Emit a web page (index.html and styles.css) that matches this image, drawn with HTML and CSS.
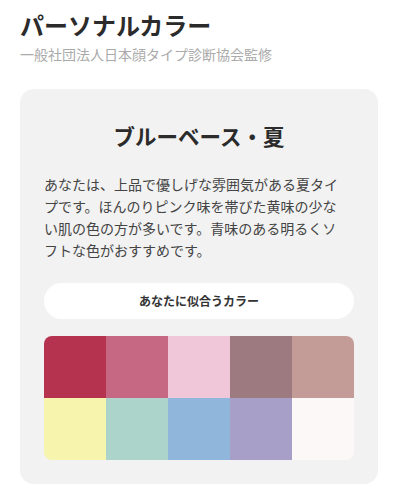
FILE: index.html
```html
<!DOCTYPE html>
<html lang="ja">
<head>
    <meta charset="UTF-8">
    <meta name="viewport" content="width=device-width, initial-scale=1.0">
    <title>パーソナルカラー</title>
    <link rel="stylesheet" href="styles.css">
</head>
<body>
    <div class="page">
        <h1 class="title">パーソナルカラー</h1>
        <p class="subtitle">一般社団法人日本顔タイプ診断協会監修</p>

        <div class="result-card">
            <h2 class="result-title">ブルーベース・夏</h2>
            <p class="result-text">あなたは、上品で優しげな雰囲気がある夏タイプです。ほんのりピンク味を帯びた黄味の少ない肌の色の方が多いです。青味のある明るくソフトな色がおすすめです。</p>
            <div class="label-pill">あなたに似合うカラー</div>
            <div class="palette">
                <div class="swatch c1"></div>
                <div class="swatch c2"></div>
                <div class="swatch c3"></div>
                <div class="swatch c4"></div>
                <div class="swatch c5"></div>
                <div class="swatch c6"></div>
                <div class="swatch c7"></div>
                <div class="swatch c8"></div>
                <div class="swatch c9"></div>
                <div class="swatch c10"></div>
            </div>
        </div>
    </div>
</body>
</html>
```

FILE: styles.css
```css
body {
    font-family: "Noto Sans CJK JP", "Noto Sans", sans-serif;
    margin: 0;
    background-color: #ffffff;
    color: #333333;
}
.page {
    padding: 10px 22px 0 20px;
}
.title {
    font-size: 24px;
    font-weight: bold;
    line-height: 30px;
    margin: 0;
    color: #2b2b2b;
}
.subtitle {
    font-size: 14px;
    line-height: 20px;
    margin: 4px 0 0 0;
    color: #aaaaaa;
}
.result-card {
    margin-top: 25px;
    background-color: #f2f2f2;
    border-radius: 14px;
    padding: 30px 24px 24px;
}
.result-title {
    font-size: 21.5px;
    font-weight: bold;
    line-height: 34px;
    text-align: center;
    margin: 0;
    color: #2b2b2b;
}
.result-text {
    font-size: 14px;
    line-height: 22px;
    color: #444444;
    margin: 20px 0 0 0;
    padding-right: 10px;
}
.label-pill {
    margin-top: 22px;
    background-color: white;
    border-radius: 18px;
    height: 36px;
    line-height: 36px;
    text-align: center;
    font-size: 12px;
    font-weight: bold;
    color: #333333;
}
.palette {
    margin-top: 17px;
    display: grid;
    grid-template-columns: repeat(5, 1fr);
    grid-auto-rows: 62px;
    border-radius: 8px;
    overflow: hidden;
}
.c1 { background-color: #b5334f; }
.c2 { background-color: #c66783; }
.c3 { background-color: #f0c6d9; }
.c4 { background-color: #9d7a80; }
.c5 { background-color: #c39c98; }
.c6 { background-color: #f7f4ad; }
.c7 { background-color: #acd4cb; }
.c8 { background-color: #91b6dc; }
.c9 { background-color: #a79fc8; }
.c10 { background-color: #fdf8f8; }
```
